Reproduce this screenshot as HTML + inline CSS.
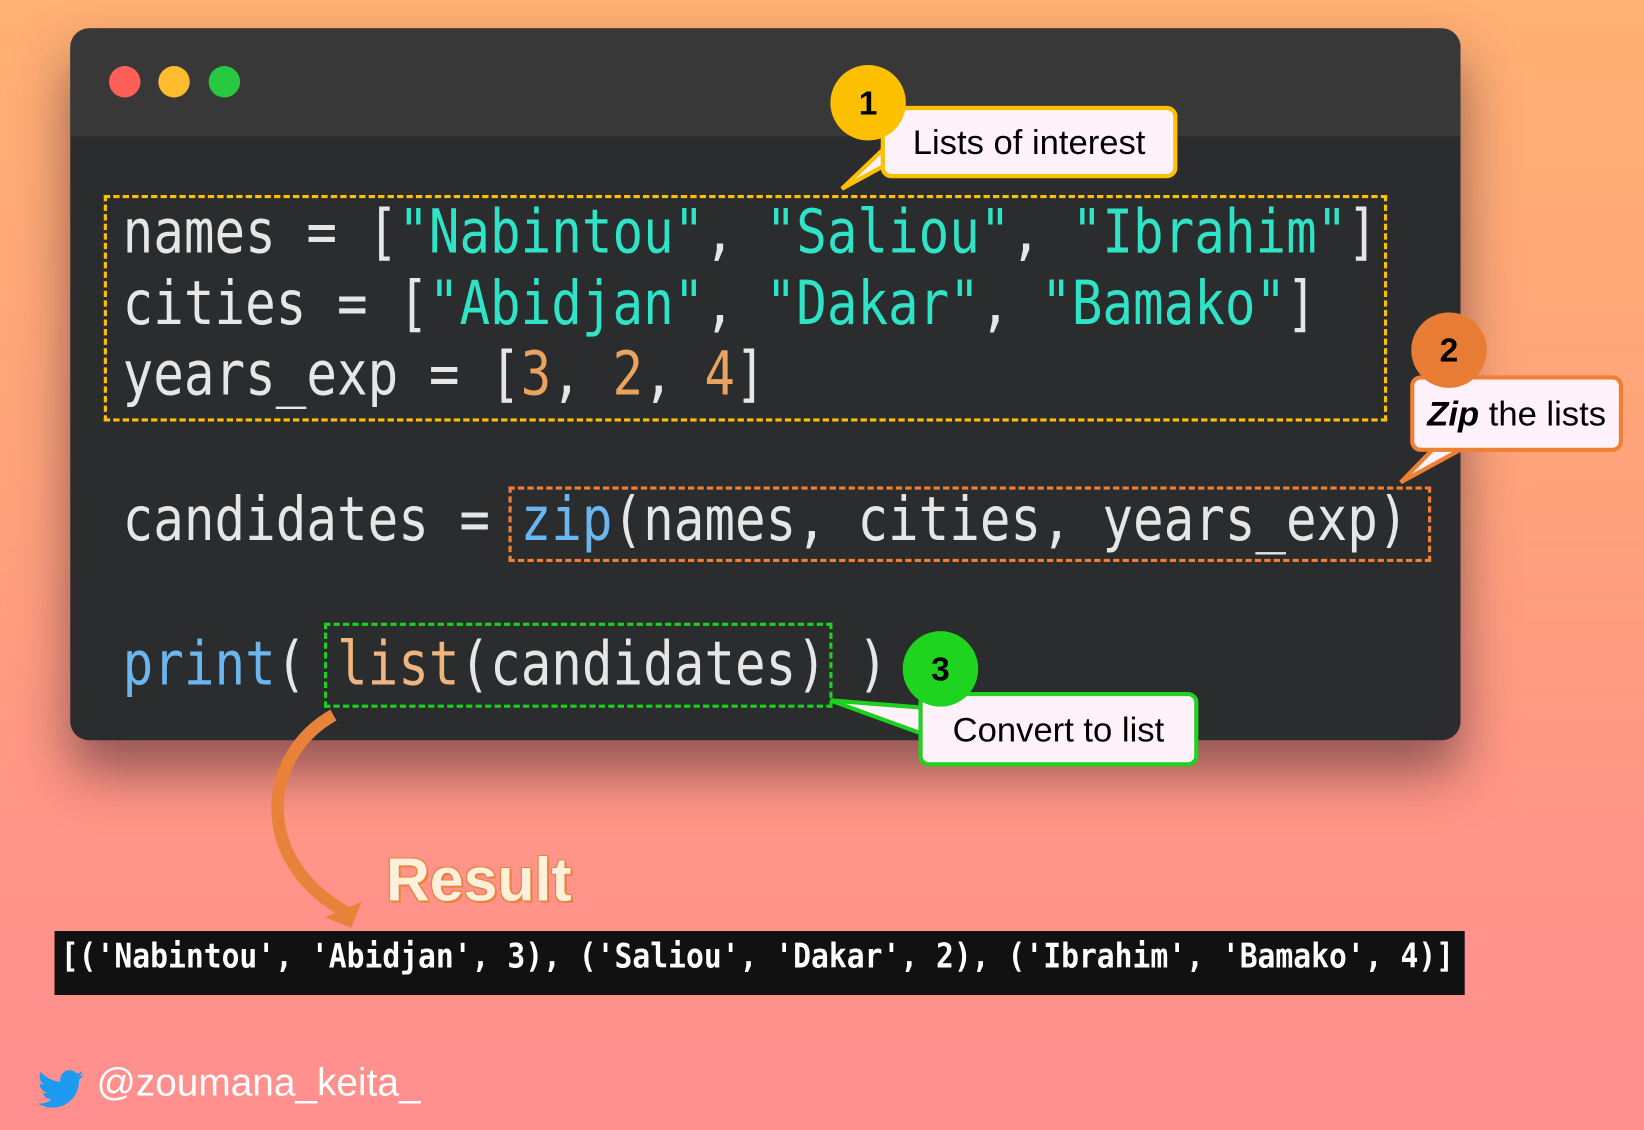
<!DOCTYPE html>
<html><head><meta charset="utf-8"><style>
html,body{margin:0;padding:0;width:1644px;height:1130px;overflow:hidden}
body{background:linear-gradient(180deg,#ffb073 0%,#ffa27c 45%,#ff9488 75%,#ff8f8f 100%)}
#s{position:absolute;left:0;top:0;width:1568px;height:1078px;transform:scale(1.04847);transform-origin:0 0}
.win{position:absolute;left:67px;top:27px;width:1326px;height:679px;border-radius:18px;background:#2b2c2d;box-shadow:0 30px 50px rgba(40,20,40,.5);overflow:hidden}
.hdr{position:absolute;left:0;top:0;right:0;height:103px;background:#383838}
.dot{position:absolute;top:36px;width:30px;height:30px;border-radius:50%}
.code{position:absolute;font-family:"DejaVu Sans Mono","Liberation Mono",monospace;font-size:48.5px;color:#e6e6e6;white-space:pre;line-height:56.7px;transform:scaleY(1.2);transform-origin:0 0}
.st{color:#2fe3c6}.nu{color:#eaa35f}.fn{color:#6cb6f0}.li{color:#f0b57e}
.box{position:absolute;border:3px dashed}
.bub{position:absolute;background:#fff2fb;border:4px solid;border-radius:10px;font-family:"Liberation Sans",sans-serif;font-size:33px;color:#000;box-sizing:border-box;display:flex;align-items:center;justify-content:center}
.circ{position:absolute;width:72px;height:72px;border-radius:50%;font-family:"Liberation Sans",sans-serif;font-weight:bold;font-size:32px;display:flex;align-items:center;justify-content:center;color:#000}
</style></head><body><div id="s">
<div class="win">
<div class="hdr"></div>
<div class="dot" style="left:37px;background:#fe5f57"></div>
<div class="dot" style="left:84px;background:#febc2e"></div>
<div class="dot" style="left:132px;background:#28c840"></div>
</div>
<div class="code" style="left:117px;top:188px">names = [<span class="st">"Nabintou"</span>, <span class="st">"Saliou"</span>, <span class="st">"Ibrahim"</span>]
cities = [<span class="st">"Abidjan"</span>, <span class="st">"Dakar"</span>, <span class="st">"Bamako"</span>]
years_exp = [<span class="nu">3</span>, <span class="nu">2</span>, <span class="nu">4</span>]</div>
<div class="code" style="left:117px;top:462px">candidates = <span class="fn">zip</span>(names, cities, years_exp)</div>
<div class="code" style="left:117px;top:600px"><span class="fn">print</span>( <span class="li">list</span>(candidates) )</div>
<div class="box" style="left:99px;top:186px;width:1218px;height:210px;border-color:#fcc000"></div>
<div class="box" style="left:485px;top:464px;width:874px;height:66px;border-color:#ef7f33"></div>
<div class="box" style="left:309px;top:594px;width:479px;height:75px;border-color:#1ed01e"></div>
<svg style="position:absolute;left:0;top:0" width="1568" height="1078">
<polygon points="845,140 803,180 858,150" fill="#fff2fb" stroke="#fcc000" stroke-width="4"/>
<polygon points="1400,425 1336,460 1370,425" fill="#fff2fb" stroke="#ef7f33" stroke-width="4"/>
<polygon points="880,675 792,668 880,700" fill="#fff2fb" stroke="#1ed01e" stroke-width="4"/>
<path d="M318,682 C250,720 240,820 330,870" fill="none" stroke="#e8823a" stroke-width="12"/>
<polygon points="310,875 345,860 335,885" fill="#e8823a"/>
</svg>
<div class="bub" style="left:840px;top:101px;width:283px;height:69px;border-color:#fcc000">Lists of interest</div>
<div class="circ" style="left:792px;top:62px;background:#fcc000">1</div>
<div class="bub" style="left:1345px;top:358px;width:203px;height:73px;border-color:#ef7f33"><b><i>Zip</i></b>&nbsp;the lists</div>
<div class="circ" style="left:1346px;top:298px;background:#e97c35">2</div>
<div class="bub" style="left:876px;top:660px;width:267px;height:71px;border-color:#22d022">Convert to list</div>
<div class="circ" style="left:861px;top:602px;background:#1ed41e">3</div>
<div style="position:absolute;left:368px;top:806px;font-family:'Liberation Sans',sans-serif;font-weight:bold;font-size:58px;color:#fff0dc;text-shadow:2px 2px 0 #e8823a,-1px -1px 0 #e8823a,1px -1px 0 #e8823a,-1px 1px 0 #e8823a">Result</div>
<div style="position:absolute;left:52px;top:888px;width:1345px;height:61px;background:#111"></div>
<div style="position:absolute;left:58px;top:893px;font-family:'DejaVu Sans Mono','Liberation Mono',monospace;font-weight:bold;font-size:28.3px;color:#fff;white-space:pre;transform:scaleY(1.15);transform-origin:0 0">[('Nabintou', 'Abidjan', 3), ('Saliou', 'Dakar', 2), ('Ibrahim', 'Bamako', 4)]</div>
<svg style="position:absolute;left:36px;top:1020px" width="44" height="38" viewBox="0 0 24 20"><path fill="#1d9bf0" d="M24 2.4c-.9.4-1.8.6-2.8.8 1-.6 1.8-1.6 2.2-2.7-1 .6-2 1-3.1 1.2C19.3.6 18 0 16.6 0c-2.7 0-4.9 2.2-4.9 4.9 0 .4 0 .8.1 1.1C7.7 5.8 4.1 3.9 1.7.9c-.4.7-.7 1.6-.7 2.5 0 1.7.9 3.2 2.2 4.1-.8 0-1.6-.2-2.2-.6v.1c0 2.4 1.7 4.4 3.9 4.8-.4.1-.8.2-1.3.2-.3 0-.6 0-.9-.1.6 2 2.4 3.4 4.6 3.4-1.7 1.3-3.8 2.1-6.1 2.1-.4 0-.8 0-1.2-.1 2.2 1.4 4.8 2.2 7.5 2.2 9.1 0 14-7.5 14-14v-.6c1-.7 1.8-1.6 2.5-2.5z"/></svg>
<div style="position:absolute;left:92px;top:1012px;font-family:'Liberation Sans',sans-serif;font-size:37px;color:#fff">@zoumana_keita_</div>
</div></body></html>
